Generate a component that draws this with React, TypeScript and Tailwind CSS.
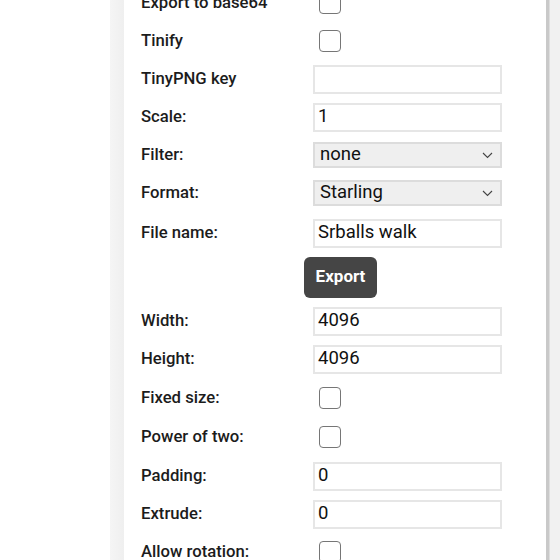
import type { ReactNode } from "react";

type Field =
  | { kind: "check"; label: string; extra?: string }
  | { kind: "text"; label: string; value: string; extra?: string }
  | { kind: "select"; label: string; value: string; extra?: string }
  | { kind: "button"; label: string; extra?: string };

const FIELDS: Field[] = [
  { kind: "check", label: "Export to base64" },
  { kind: "check", label: "Tinify" },
  { kind: "text", label: "TinyPNG key", value: "" },
  { kind: "text", label: "Scale:", value: "1" },
  { kind: "select", label: "Filter:", value: "none" },
  { kind: "select", label: "Format:", value: "Starling" },
  { kind: "text", label: "File name:", value: "Srballs walk", extra: "mt-[2px]" },
  { kind: "button", label: "Export", extra: "mt-[6px]" },
  { kind: "text", label: "Width:", value: "4096", extra: "mt-[6px]" },
  { kind: "text", label: "Height:", value: "4096" },
  { kind: "check", label: "Fixed size:", extra: "mt-px" },
  { kind: "check", label: "Power of two:", extra: "mt-px" },
  { kind: "text", label: "Padding:", value: "0", extra: "mt-px" },
  { kind: "text", label: "Extrude:", value: "0" },
  { kind: "check", label: "Allow rotation:" },
];

function Chevron() {
  return (
    <svg width="11" height="7" viewBox="0 0 11 7" fill="none" className="shrink-0">
      <path d="M1 1 5.5 5.5 10 1" stroke="#444" strokeWidth="1.1" />
    </svg>
  );
}

function Control({ field }: { field: Field }): ReactNode {
  switch (field.kind) {
    case "check":
      return <div className="ml-[6px] h-[22px] w-[22px] rounded-[4px] border-[1.5px] border-[#767676] bg-white" />;
    case "text":
      return (
        <div className="flex h-[29px] w-[189px] items-center border-2 border-[#e6e6e6] bg-white pl-[3px] text-[18.5px] text-[#111]">
          {field.value}
        </div>
      );
    case "select":
      return (
        <div className="flex h-[26px] w-[189px] items-center justify-between border-2 border-[#dcdcdc] bg-[#efefef] pl-[5px] pr-[7px] text-[18.5px] text-[#111]">
          <span>{field.value}</span>
          <Chevron />
        </div>
      );
    case "button":
      return (
        <div className="ml-[-9px] flex h-[41px] w-[73px] items-center justify-center rounded-[6px] bg-[#454545] text-[17px] font-bold text-white">
          Export
        </div>
      );
  }
}

export default function App() {
  return (
    <div className="flex h-[560px] w-[560px] overflow-hidden bg-white font-['Roboto','Liberation_Sans',sans-serif]">
      <div className="w-[110px] shrink-0 bg-white" />
      <div className="w-[14px] shrink-0 bg-gradient-to-r from-[#f5f5f5] to-[#efefef]" />
      <div className="flex-1 bg-white pl-[17px]">
        <div className="mt-[-16px] flex flex-col">
          {FIELDS.map((f, i) => (
            <div key={i} className={`flex h-[38px] items-center ${f.extra ?? ""}`}>
              <div className="w-[172px] shrink-0 text-[16.7px] font-medium text-[#1c1c1c]">
                {f.kind === "button" ? "" : f.label}
              </div>
              <Control field={f} />
            </div>
          ))}
        </div>
      </div>
      <div className="w-[3px] shrink-0 bg-[#c9c9c9]" />
      <div className="w-px shrink-0 bg-[#dddddd]" />
      <div className="w-[10px] shrink-0 bg-[#f1f1f1]" />
    </div>
  );
}
